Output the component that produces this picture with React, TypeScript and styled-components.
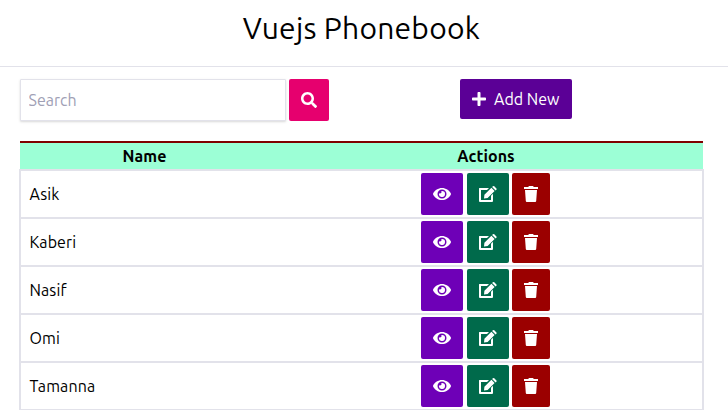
import React from "react";
import styled, { createGlobalStyle } from "styled-components";
import { FaEye, FaPlus, FaSearch } from "react-icons/fa";

const GlobalStyle = createGlobalStyle`
  *, *::before, *::after { box-sizing: border-box; }
  body {
    margin: 0;
    overflow: hidden;
    background: #fff;
    color: #000;
    font: 400 16px/24px Ubuntu, "Noto Sans", sans-serif;
  }
`;

const Page = styled.main`
  height: 410px;
  overflow: hidden;
`;

const Header = styled.header`
  display: flex;
  justify-content: center;
  height: 67px;
  padding: 6px 5px 0 0;
  border-bottom: 1px solid #e2e2ea;
`;

const Title = styled.h1`
  margin: 0;
  font-size: 30px;
  font-weight: 400;
  line-height: 45px;
  letter-spacing: 0.25px;
  white-space: nowrap;
`;

const Toolbar = styled.div`
  display: flex;
  align-items: flex-start;
  height: 74px;
  padding: 12px 0 0 20px;
`;

const SearchInput = styled.input`
  width: 266px;
  height: 42px;
  margin: 0 3px 0 0;
  padding: 0 7.5px;
  border: 1px solid #e2e2ea;
  border-radius: 1px;
  box-shadow: 0 1px 3px rgba(0, 0, 0, 0.1), 0 1px 2px rgba(0, 0, 0, 0.06);
  font: inherit;
  outline: none;

  &::placeholder {
    color: #a0a0b5;
    opacity: 1;
  }
`;

const Button = styled.button<{ $color: string; $width: number; $height?: number }>`
  display: flex;
  align-items: center;
  justify-content: center;
  flex: none;
  width: ${(p) => p.$width}px;
  height: ${(p) => p.$height ?? 42}px;
  padding: 0;
  border: 0;
  border-radius: 2px;
  background: ${(p) => p.$color};
  color: #fff;
  font: inherit;
`;

const AddButton = styled(Button)`
  justify-content: flex-start;
  gap: 7px;
  margin-left: 131px;
  padding-left: 11px;
  white-space: nowrap;
`;

const Table = styled.div`
  width: 685px;
  margin-left: 19px;
`;

const TableHead = styled.div`
  display: grid;
  grid-template-columns: 249px 1fr;
  height: 28px;
  margin: 0 1px;
  border-top: 2px solid #800000;
  background: #9cffd6;
`;

const HeadCell = styled.div`
  font-weight: 700;
  line-height: 26px;
  text-align: center;
  letter-spacing: 0.1px;
`;

const Rows = styled.div`
  border: 2px solid #e2e2ea;
`;

const Row = styled.div`
  display: grid;
  grid-template-columns: 250px 1fr;
  height: 48px;

  & + & {
    border-top: 2px solid #e2e2ea;
  }

  &:first-child {
    height: 46px;
  }
`;

const NameCell = styled.div`
  padding-left: 8.5px;
  line-height: 46px;
  letter-spacing: 0.1px;
`;

const ActionCell = styled.div`
  display: flex;
  align-items: center;
  padding-left: 150px;

  ${Button}:nth-child(2) {
    margin: 0 3px 0 4px;
  }
`;

const EditIcon = () => (
  <svg width="20" height="16" viewBox="0 0 20 16" fill="currentColor">
    <path d="M1.4 2H11L9 4H3v10h10V9.8l2-2V15q0 1-1 1H2q-1 0-1-1V2.5q0-.5.4-.5z" />
    <path d="M6 12.4l.4-3.7 7-7 3.2 3.2-7 7zM14.1 1.1l.8-.8q.7-.6 1.4 0l2.1 2.1q.6.7 0 1.4l-.8.8z" />
  </svg>
);

const TrashIcon = () => (
  <svg width="16" height="16" viewBox="0 0 16 16" fill="currentColor">
    <path d="M1 1h4.2L6 0h4l.8 1H15v2H1zM2 4h12l-.8 11q-.1 1-1 1H3.8q-.9 0-1-1z" />
  </svg>
);

const contacts = ["Asik", "Kaberi", "Nasif", "Omi", "Tamanna"];

export default function App() {
  return (
    <Page>
      <GlobalStyle />
      <Header>
        <Title>Vuejs Phonebook</Title>
      </Header>
      <Toolbar>
        <SearchInput placeholder="Search" aria-label="Search" />
        <Button $color="#e6006e" $width={40} aria-label="Search contacts">
          <FaSearch size={16} />
        </Button>
        <AddButton $color="#5b0096" $width={112} $height={40}>
          <FaPlus size={16} />
          Add New
        </AddButton>
      </Toolbar>
      <Table>
        <TableHead>
          <HeadCell>Name</HeadCell>
          <HeadCell>Actions</HeadCell>
        </TableHead>
        <Rows>
          {contacts.map((name) => (
            <Row key={name}>
              <NameCell>{name}</NameCell>
              <ActionCell>
                <Button $color="#6e00b7" $width={42} aria-label={`View ${name}`}>
                  <FaEye size={18} />
                </Button>
                <Button $color="#006a4b" $width={42} aria-label={`Edit ${name}`}>
                  <EditIcon />
                </Button>
                <Button $color="#9b0000" $width={38} aria-label={`Delete ${name}`}>
                  <TrashIcon />
                </Button>
              </ActionCell>
            </Row>
          ))}
        </Rows>
      </Table>
    </Page>
  );
}
